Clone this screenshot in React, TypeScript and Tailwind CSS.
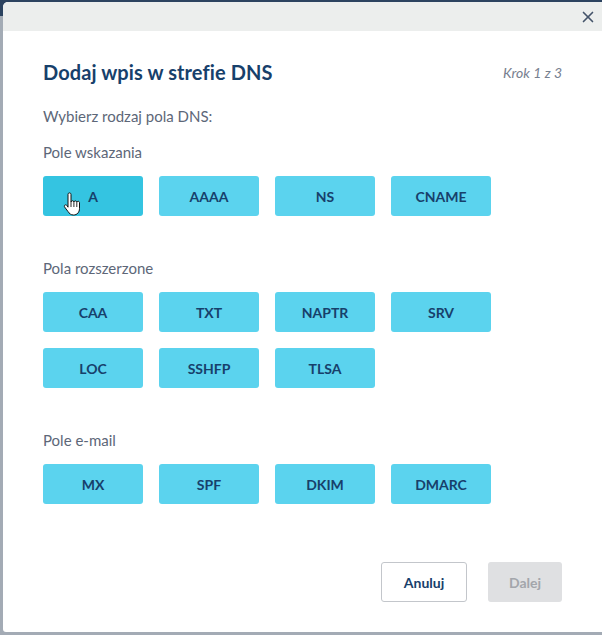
import { X } from "lucide-react";

const groups = [
  { label: "Pole wskazania", items: ["A", "AAAA", "NS", "CNAME"] },
  { label: "Pola rozszerzone", items: ["CAA", "TXT", "NAPTR", "SRV", "LOC", "SSHFP", "TLSA"] },
  { label: "Pole e-mail", items: ["MX", "SPF", "DKIM", "DMARC"] },
];

function HandCursor() {
  return (
    <svg
      className="absolute left-[20px] top-[16px]"
      width="18"
      height="24"
      viewBox="0 0 18 24"
    >
      <path
        d="M5 2.5c0-1 .7-1.6 1.5-1.6S8 1.5 8 2.5V10c.2-.9.8-1.3 1.5-1.3s1.3.5 1.4 1.4c.2-.8.8-1.2 1.5-1.2s1.3.5 1.4 1.4c.2-.7.7-1 1.3-1 .8 0 1.4.6 1.4 1.5v5.7c0 3.8-2.4 6.5-6 6.5-2.6 0-4.2-1.4-5.6-3.6L1.6 15c-.5-.8-.3-1.6.4-2 .7-.4 1.5-.1 2 .6L5 15.2V2.5z"
        fill="#fff"
        stroke="#111"
        strokeWidth="1"
        strokeLinejoin="round"
      />
      <path d="M8 10v5M10.9 10.2v4.8M13.8 10.4v4.6" stroke="#111" strokeWidth="0.9" />
    </svg>
  );
}

export default function App() {
  return (
    <div
      className="w-[602px] h-[635px] pt-[2px] pl-[3px] pb-[3px] bg-[linear-gradient(to_bottom,#2c4360_16px,#a3abb5_16px)]"
      style={{ fontFamily: "Lato, 'Open Sans', sans-serif" }}
    >
      <div className="w-[599px] h-[630px] bg-white rounded-tl-[5px] rounded-bl-[3px] overflow-hidden flex flex-col">
        <div className="h-[29px] bg-[#eceeed] flex items-center justify-end pr-[5px] shrink-0">
          <X size={18} strokeWidth={2.2} className="text-[#44546a]" />
        </div>
        <div className="flex-1 flex flex-col px-[40px] pt-[29px]">
          <div className="flex items-center justify-between h-[24px]">
            <h1 className="text-[20px] font-bold text-[#17406b] tracking-[0.1px]">
              Dodaj wpis w strefie DNS
            </h1>
            <span className="text-[14px] italic text-[#77808f]">Krok 1 z 3</span>
          </div>
          <p className="mt-[22px] text-[15px] text-[#5d6778] leading-[20px]">
            Wybierz rodzaj pola DNS:
          </p>
          {groups.map((g, gi) => (
            <div key={g.label} className={gi === 0 ? "mt-[16px]" : "mt-[42px]"}>
              <div className="text-[15px] text-[#5d6778] leading-[20px]">{g.label}</div>
              <div className="mt-[14px] grid grid-cols-[100px_100px_100px_100px] gap-[16px]">
                {g.items.map((it) => (
                  <button
                    key={it}
                    className={
                      "relative h-[40px] rounded-[3px] text-[14px] font-bold text-[#17406b] " +
                      (it === "A" ? "bg-[#34c4e1]" : "bg-[#5bd3ee]")
                    }
                  >
                    {it}
                    {it === "A" && <HandCursor />}
                  </button>
                ))}
              </div>
            </div>
          ))}
          <div className="mt-auto mb-[30px] flex justify-end gap-[21px]">
            <button className="w-[86px] h-[40px] border border-[#c3c6cb] rounded-[3px] text-[14px] font-bold text-[#17406b] bg-white">
              Anuluj
            </button>
            <button className="w-[74px] h-[40px] rounded-[3px] text-[14px] font-bold text-[#a3a6ab] bg-[#dfe0e2]">
              Dalej
            </button>
          </div>
        </div>
      </div>
    </div>
  );
}
